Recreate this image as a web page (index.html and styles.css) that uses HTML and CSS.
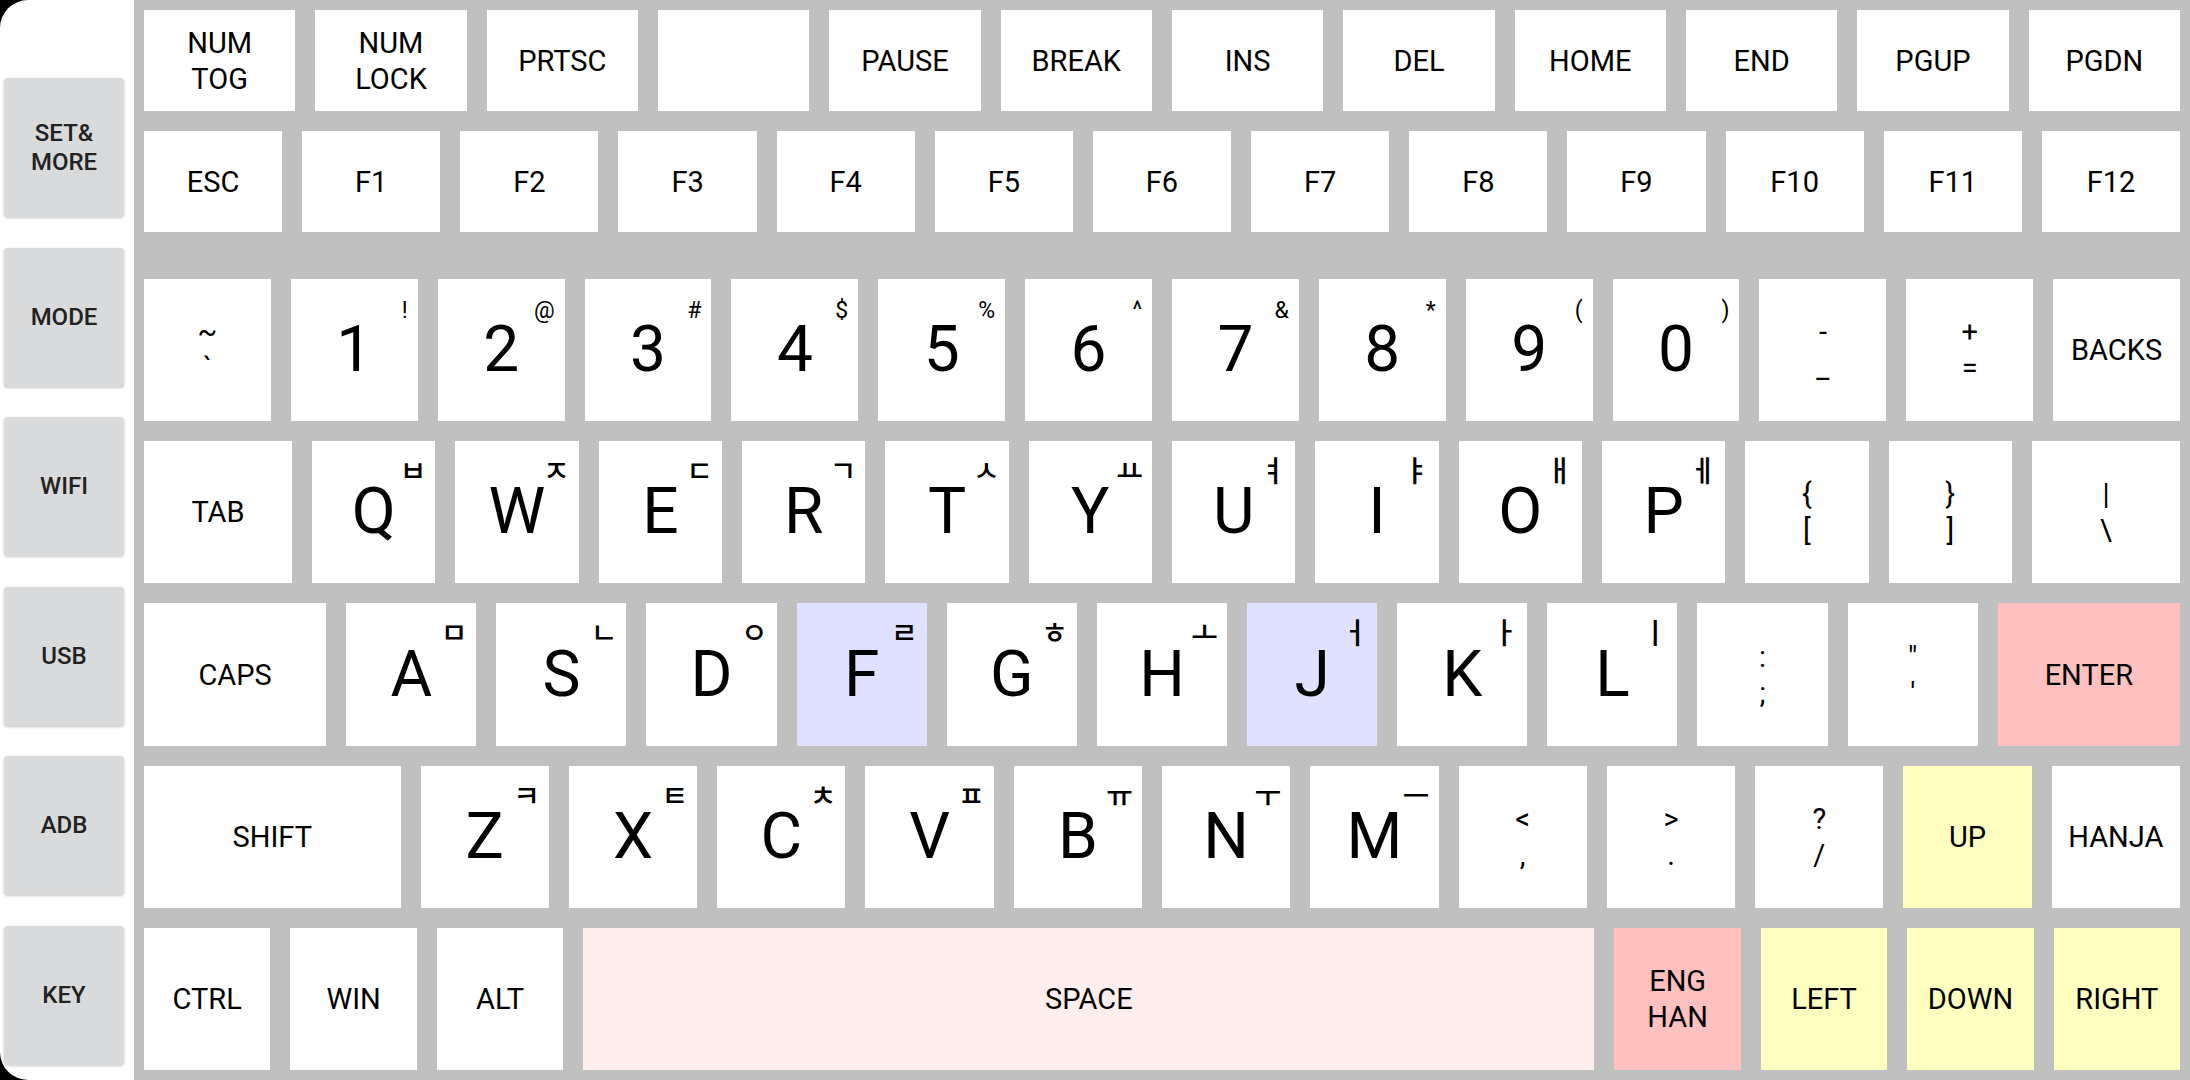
FILE: index.html
```html
<!DOCTYPE html>
<html lang="ko">
<head>
<meta charset="utf-8">
<title>Keyboard</title>
<link rel="stylesheet" href="styles.css">
</head>
<body>
<div class="app">
  <aside class="sidebar">
    <div class="side-btn">SET&amp;<br>MORE</div>
    <div class="side-btn">MODE</div>
    <div class="side-btn">WIFI</div>
    <div class="side-btn">USB</div>
    <div class="side-btn">ADB</div>
    <div class="side-btn">KEY</div>
  </aside>
  <main class="board">
    <section class="fn-block">
      <div class="row">
        <div class="key">NUM<br>TOG</div>
        <div class="key">NUM<br>LOCK</div>
        <div class="key">PRTSC</div>
        <div class="key"></div>
        <div class="key">PAUSE</div>
        <div class="key">BREAK</div>
        <div class="key">INS</div>
        <div class="key">DEL</div>
        <div class="key">HOME</div>
        <div class="key">END</div>
        <div class="key">PGUP</div>
        <div class="key">PGDN</div>
      </div>
      <div class="row">
        <div class="key">ESC</div>
        <div class="key">F1</div>
        <div class="key">F2</div>
        <div class="key">F3</div>
        <div class="key">F4</div>
        <div class="key">F5</div>
        <div class="key">F6</div>
        <div class="key">F7</div>
        <div class="key">F8</div>
        <div class="key">F9</div>
        <div class="key">F10</div>
        <div class="key">F11</div>
        <div class="key">F12</div>
      </div>
    </section>
    <section class="main-block">
      <div class="row">
        <div class="key sym"><span>~</span><span>`</span></div>
        <div class="key big">1<span class="sup">!</span></div>
        <div class="key big">2<span class="sup">@</span></div>
        <div class="key big">3<span class="sup">#</span></div>
        <div class="key big">4<span class="sup">$</span></div>
        <div class="key big">5<span class="sup">%</span></div>
        <div class="key big">6<span class="sup">^</span></div>
        <div class="key big">7<span class="sup">&amp;</span></div>
        <div class="key big">8<span class="sup">*</span></div>
        <div class="key big">9<span class="sup">(</span></div>
        <div class="key big">0<span class="sup">)</span></div>
        <div class="key sym"><span>-</span><span>_</span></div>
        <div class="key sym"><span>+</span><span>=</span></div>
        <div class="key">BACKS</div>
      </div>
      <div class="row">
        <div class="key w12">TAB</div>
        <div class="key big">Q<span class="han">ㅂ</span></div>
        <div class="key big">W<span class="han">ㅈ</span></div>
        <div class="key big">E<span class="han">ㄷ</span></div>
        <div class="key big">R<span class="han">ㄱ</span></div>
        <div class="key big">T<span class="han">ㅅ</span></div>
        <div class="key big">Y<span class="han">ㅛ</span></div>
        <div class="key big">U<span class="han">ㅕ</span></div>
        <div class="key big">I<span class="han">ㅑ</span></div>
        <div class="key big">O<span class="han">ㅐ</span></div>
        <div class="key big">P<span class="han">ㅔ</span></div>
        <div class="key sym"><span>{</span><span>[</span></div>
        <div class="key sym"><span>}</span><span>]</span></div>
        <div class="key sym w12"><span>|</span><span>\</span></div>
      </div>
      <div class="row">
        <div class="key w14">CAPS</div>
        <div class="key big">A<span class="han">ㅁ</span></div>
        <div class="key big">S<span class="han">ㄴ</span></div>
        <div class="key big">D<span class="han">ㅇ</span></div>
        <div class="key big home">F<span class="han">ㄹ</span></div>
        <div class="key big">G<span class="han">ㅎ</span></div>
        <div class="key big">H<span class="han">ㅗ</span></div>
        <div class="key big home">J<span class="han">ㅓ</span></div>
        <div class="key big">K<span class="han">ㅏ</span></div>
        <div class="key big">L<span class="han">ㅣ</span></div>
        <div class="key sym"><span>:</span><span>;</span></div>
        <div class="key sym"><span>"</span><span>'</span></div>
        <div class="key w14 hot">ENTER</div>
      </div>
      <div class="row">
        <div class="key w20">SHIFT</div>
        <div class="key big">Z<span class="han">ㅋ</span></div>
        <div class="key big">X<span class="han">ㅌ</span></div>
        <div class="key big">C<span class="han">ㅊ</span></div>
        <div class="key big">V<span class="han">ㅍ</span></div>
        <div class="key big">B<span class="han">ㅠ</span></div>
        <div class="key big">N<span class="han">ㅜ</span></div>
        <div class="key big">M<span class="han">ㅡ</span></div>
        <div class="key sym"><span>&lt;</span><span>,</span></div>
        <div class="key sym"><span>&gt;</span><span>.</span></div>
        <div class="key sym"><span>?</span><span>/</span></div>
        <div class="key arrow">UP</div>
        <div class="key">HANJA</div>
      </div>
      <div class="row">
        <div class="key">CTRL</div>
        <div class="key">WIN</div>
        <div class="key">ALT</div>
        <div class="key w80 space">SPACE</div>
        <div class="key hot">ENG<br>HAN</div>
        <div class="key arrow">LEFT</div>
        <div class="key arrow">DOWN</div>
        <div class="key arrow">RIGHT</div>
      </div>
    </section>
  </main>
</div>
</body>
</html>
```

FILE: styles.css
```css
html, body {
  margin: 0;
  padding: 0;
  background: #000;
}

body {
  font-family: Roboto, "Noto Sans CJK KR", sans-serif;
  color: #000;
}

.app {
  display: flex;
  width: 2190px;
  height: 1080px;
  overflow: hidden;
}

.sidebar {
  width: 134px;
  flex: none;
  background: #fff;
  border-radius: 28px 0 0 28px;
  box-sizing: border-box;
  padding: 78px 0 0 4px;
  display: flex;
  flex-direction: column;
  gap: 30.6px;
}

.side-btn {
  width: 120px;
  height: 139px;
  flex: none;
  background: #d9dadb;
  border-radius: 4px;
  box-shadow: 0 1px 3px rgba(0, 0, 0, 0.22);
  display: flex;
  align-items: center;
  justify-content: center;
  text-align: center;
  font-size: 24px;
  line-height: 29px;
  font-weight: 500;
  color: #222;
}

.board {
  flex: 1;
  background: #c0c0c0;
  box-sizing: border-box;
  padding: 10px;
  display: flex;
  flex-direction: column;
  gap: 47px;
}

.fn-block {
  display: flex;
  flex-direction: column;
  gap: 20px;
  flex: none;
}

.fn-block .row {
  height: 101px;
}

.main-block {
  flex: 1;
  display: flex;
  flex-direction: column;
  gap: 20px;
}

.main-block .row {
  flex: 1;
}

.row {
  display: flex;
  gap: 20px;
}

.key {
  position: relative;
  flex: 1 1 0;
  min-width: 0;
  background: #fff;
  display: flex;
  flex-direction: column;
  align-items: center;
  justify-content: center;
  text-align: center;
  font-size: 29px;
  line-height: 36px;
}

.key.w12 { flex-grow: 1.2; }
.key.w14 { flex-grow: 1.4; }
.key.w20 { flex-grow: 2; }
.key.w80 { flex-grow: 8; }

.key.big {
  font-size: 64px;
  line-height: 1;
}

.key.sym {
  line-height: 36px;
}

.sup {
  position: absolute;
  top: 20px;
  right: 10px;
  font-size: 23px;
  line-height: 1;
}

.han {
  position: absolute;
  top: 14px;
  right: 9px;
  font-family: "Noto Sans CJK KR", sans-serif;
  font-size: 29px;
  font-weight: 500;
  line-height: 1;
}

.key.home { background: #e0e0ff; }
.key.hot { background: #ffc0c0; }
.key.arrow { background: #ffffc0; }
.key.space { background: #ffeeee; }
```
